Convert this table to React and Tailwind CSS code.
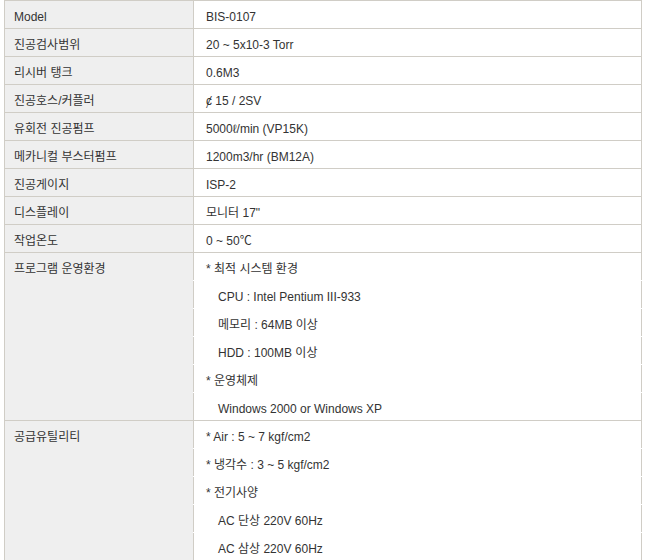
const SPECS = [
  { label: "Model", lines: [{ text: "BIS-0107" }] },
  { label: "진공검사범위", lines: [{ text: "20 ~ 5x10-3 Torr" }] },
  { label: "리시버 탱크", lines: [{ text: "0.6M3" }] },
  { label: "진공호스/커플러", lines: [{ text: "ȼ 15 / 2SV" }] },
  { label: "유회전 진공펌프", lines: [{ text: "5000ℓ/min (VP15K)" }] },
  { label: "메카니컬 부스터펌프", lines: [{ text: "1200m3/hr (BM12A)" }] },
  { label: "진공게이지", lines: [{ text: "ISP-2" }] },
  { label: "디스플레이", lines: [{ text: "모니터 17\"" }] },
  { label: "작업온도", lines: [{ text: "0 ~ 50℃" }] },
  {
    label: "프로그램 운영환경",
    lines: [
      { text: "* 최적 시스템 환경" },
      { text: "CPU : Intel Pentium III-933", indent: true },
      { text: "메모리 : 64MB 이상", indent: true },
      { text: "HDD : 100MB 이상", indent: true },
      { text: "* 운영체제" },
      { text: "Windows 2000 or Windows XP", indent: true },
    ],
  },
  {
    label: "공급유틸리티",
    lines: [
      { text: "* Air : 5 ~ 7 kgf/cm2" },
      { text: "* 냉각수 : 3 ~ 5 kgf/cm2" },
      { text: "* 전기사양" },
      { text: "AC 단상 220V 60Hz", indent: true },
      { text: "AC 삼상 220V 60Hz", indent: true },
    ],
  },
];

const SpecRow = ({ label, lines }) => (
  <div className="flex border-b border-b-[#d0cdc6]">
    <div className="w-[189px] shrink-0 border-l border-l-[#d0cdc6] bg-[#efefef] pl-[9px]">
      <div className="h-[27px] pt-[4px] flex items-center">{label}</div>
    </div>
    <div className="flex flex-1 flex-col gap-px bg-white">
      {lines.map((line, i) => (
        <div key={i} className={`h-[27px] pt-[4px] flex items-center border-x border-x-[#d0cdc6] bg-white ${line.indent ? "pl-[24px]" : "pl-[12px]"}`}>
          {line.text}
        </div>
      ))}
    </div>
  </div>
);

const App = () => {
  return (
    <div className="min-h-[560px] bg-white font-['Liberation_Sans','Noto_Sans_CJK_KR',sans-serif] text-[12px] text-[#333]">
      <div className="ml-[4px] w-[638px] border-t border-t-[#d0cdc6]">
        {SPECS.map((row, i) => (
          <SpecRow key={i} label={row.label} lines={row.lines} />
        ))}
      </div>
    </div>
  );
};

export default App;
